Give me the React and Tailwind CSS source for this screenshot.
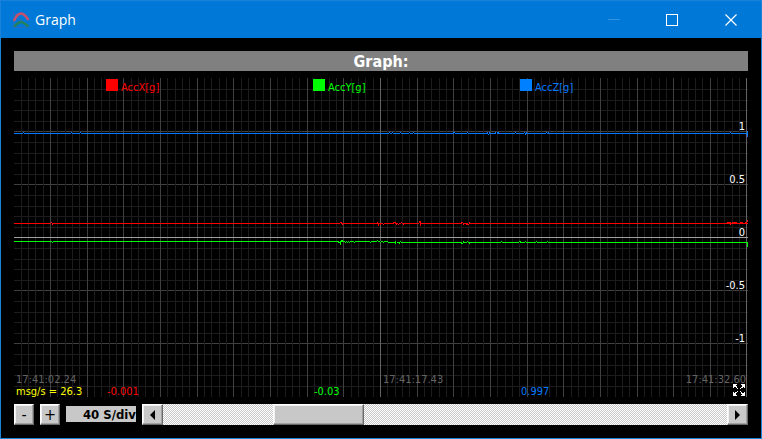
import React from "react";

const TAHOMA = "font-['DejaVu_Sans_Condensed','DejaVu_Sans',sans-serif]";
const W = 734;
const H = 319;

const range = (from, to) =>
  Array.from({ length: to - from + 1 }, (_, i) => from + i);

const columns = range(1, 100).map((k) => ({
  x: Math.round(7.331 * k - 0.62),
  major: k % 5 === 0,
  centre: k % 50 === 0,
}));

const rows = range(-14, 14).map((k) => ({
  y: 159 + Math.ceil(Math.round(106 * k) / 10),
  major: k % 5 === 0,
}));

const series = [
  {
    color: "#0078ff",
    base: [[0, 734, 55]],
    gaps: [9, 57, 66, 375, 378, 386, 395, 399, 440, 453, 474, 482, 501, 510, 532, 716],
    dots: [
      [9, 54], [57, 54], [66, 54], [375, 54], [378, 54], [386, 54], [395, 54],
      [399, 54], [439, 54, 2], [453, 54], [473, 54], [475, 54], [474, 56],
      [481, 54], [483, 54, 2], [501, 54], [510, 54], [512, 54], [511, 56],
      [532, 54], [534, 54], [716, 54], [733, 53, 1, 6],
    ],
  },
  {
    color: "#ff0000",
    base: [[0, 734, 145]],
    gaps: [37, 326, 364, 369, 380, 384, 387, 405, 448, 454],
    dots: [
      [37, 144], [38, 146], [326, 144, 2], [328, 146], [363, 144], [364, 145, 1, 3],
      [366, 146], [369, 146], [379, 144, 3], [382, 146], [384, 146], [387, 144],
      [389, 146], [405, 143, 2, 2], [406, 145, 1, 3], [447, 144, 2], [449, 146],
      [452, 146, 3], [455, 144], [713, 144, 4], [716, 146], [718, 144, 5],
      [726, 144, 3], [731, 144, 2], [733, 142, 1, 2],
    ],
  },
  {
    color: "#00ff00",
    base: [[0, 374, 163], [374, 734, 164]],
    gaps: [38, 325, 331, 333, 335, 340, 356, 363, 366, 369, 382, 386, 448, 453, 487, 505, 511, 522, 533],
    dots: [
      [38, 164], [324, 164, 2], [326, 164, 1, 3], [327, 162, 2], [331, 164],
      [333, 164], [335, 164], [340, 164], [356, 164], [363, 162], [366, 164],
      [369, 164], [381, 163, 1, 3], [386, 163], [385, 165], [447, 165, 2], [449, 163],
      [453, 163], [455, 165], [487, 163], [505, 163, 2], [511, 163], [522, 163],
      [533, 163], [733, 164, 1, 5],
    ],
  },
];

function Plot() {
  return (
    <svg
      className="block h-full w-full"
      viewBox={`0 0 ${W} ${H}`}
      preserveAspectRatio="none"
      shapeRendering="crispEdges"
      role="img"
      aria-label="Acceleration over time"
    >
      {rows.map((r) => (
        <rect key={r.y} x="0" y={r.y} width={W} height="1" fill={r.major ? "#404040" : "#1c1c1c"} />
      ))}
      {columns.filter((c) => !c.major).map((c) => (
        <rect key={c.x} x={c.x} y="0" width="1" height={H} fill="#1c1c1c" />
      ))}
      {columns.filter((c) => c.major).map((c) => (
        <rect key={c.x} x={c.x} y="0" width="1" height={H} fill={c.centre ? "#646464" : "#404040"} />
      ))}
      <rect x="0" y="159" width={W} height="1" fill="#a0a0a0" />
      {series.map((s) => (
        <g key={s.color} fill={s.color}>
          {s.base.map(([from, to, y]) => (
            <rect key={from} x={from} y={y} width={to - from} height="1" />
          ))}
          {s.gaps.map((x) => {
            const [, , y] = s.base.find(([from, to]) => x >= from && x < to);
            return <rect key={x} x={x} y={y} width="1" height="1" fill="#000" />;
          })}
          {s.dots.map(([x, y, w = 1, h = 1]) => (
            <rect key={`${x}-${y}`} x={x} y={y} width={w} height={h} />
          ))}
        </g>
      ))}
    </svg>
  );
}

const legend = [
  { name: "AccX[g]", value: "-0.001", text: "text-[#ff0000]", box: "bg-[#ff0000]" },
  { name: "AccY[g]", value: "-0.03", text: "text-[#00ff00]", box: "bg-[#00ff00]" },
  { name: "AccZ[g]", value: "0.997", text: "text-[#0078ff]", box: "bg-[#0080ff]" },
];

const scale = [
  { label: "1", top: "top-[43px]" },
  { label: "0.5", top: "top-[96px]" },
  { label: "0", top: "top-[149px]" },
  { label: "-0.5", top: "top-[202px]" },
  { label: "-1", top: "top-[255px]" },
];

const raised =
  "border border-t-white border-l-white border-r-[#696969] border-b-[#696969] bg-[#c8c8c8] shadow-[inset_-1px_-1px_0_#a0a0a0,inset_1px_1px_0_#f0f0f0]";

function TitleBar() {
  return (
    <header className="flex h-[37px] items-center bg-[#0078d7] pl-[11px] text-white">
      <svg width="18" height="18" viewBox="0 0 18 18" fill="none" aria-hidden="true">
        <path d="M1.5 1v15.500H17" stroke="#2a6cc0" strokeWidth="1" />
        <path d="M1 1l14 14" stroke="#3a68b4" strokeWidth="1" />
        <path d="M2 10C4 5.500 5.500 2.500 9 2.500S13.500 5 16.500 9" stroke="#c8506c" strokeWidth="2.500" />
        <path d="M2 15.500C5 13 6.500 11 9 11S13 13 16.500 15.500" stroke="#25805c" strokeWidth="2.500" />
      </svg>
      <h1 className="ml-[5px] flex-1 font-['Open_Sans',sans-serif] text-[14px] leading-5">Graph</h1>
      <button aria-label="Minimize" disabled className="flex h-full w-[59px] items-center justify-center">
        <svg width="12" height="12" shapeRendering="crispEdges"><rect y="5" width="12" height="1" fill="#3393df" /></svg>
      </button>
      <button aria-label="Maximize" className="flex h-full w-[58px] items-center justify-center">
        <svg width="12" height="12" shapeRendering="crispEdges"><rect x="0.5" y="0.5" width="11" height="11" fill="none" stroke="#fff" /></svg>
      </button>
      <button aria-label="Close" className="flex h-full w-[60px] items-center justify-center">
        <svg width="12" height="12"><path d="M.5.5l11 11M11.500.5l-11 11" stroke="#fff" strokeWidth="1.2" /></svg>
      </button>
    </header>
  );
}

function ExpandIcon() {
  return (
    <svg className="block" width="14" height="14" viewBox="0 0 14 14" shapeRendering="crispEdges" aria-hidden="true">
      <rect width="14" height="14" fill="#000" />
      {[0, 90, 180, 270].map((a) => (
        <g key={a} transform={`rotate(${a} 7 7)`} fill="#fff">
          <rect x="1" y="1" width="4" height="1" />
          <rect x="1" y="1" width="1" height="4" />
          <rect x="2" y="2" width="2" height="1" />
          <rect x="2" y="2" width="1" height="2" />
          <rect x="3" y="3" width="2" height="1" />
          <rect x="4" y="4" width="1" height="1" />
          <rect x="5" y="5" width="1" height="1" />
        </g>
      ))}
    </svg>
  );
}

function Chart() {
  return (
    <section className="relative mt-[7px] h-[319px] text-[11px] leading-[12px]">
      <Plot />
      <div className="absolute inset-x-0 top-px grid grid-cols-[92px_207px_207px_1fr]">
        <span />
        {legend.map((l) => (
          <div key={l.name} className={`flex gap-[3px] ${l.text}`}>
            <span className={`h-3 w-3 ${l.box}`} />
            <span className="pt-[3px]">{l.name}</span>
          </div>
        ))}
      </div>
      {scale.map((s) => (
        <span key={s.label} className={`absolute right-[3px] text-white ${s.top}`}>{s.label}</span>
      ))}
      <div className="absolute inset-x-0 bottom-[11px] grid grid-cols-[1fr_1fr] text-[#646464]">
        <span className="pl-[2px]">17:41:02.24</span>
        <span className="flex justify-between pr-[2px] pl-[2px]"><span>17:41:17.43</span><span>17:41:32.60</span></span>
      </div>
      <div className="absolute inset-x-0 -bottom-px grid grid-cols-[93px_207px_207px_1fr]">
        <span className="pl-[2px] text-[#ffff00]">msg/s = 26.3</span>
        {legend.map((l) => (
          <span key={l.name} className={l.text}>{l.value}</span>
        ))}
      </div>
      <button aria-label="Expand graph" className="absolute right-[2px] bottom-0">
        <ExpandIcon />
      </button>
    </section>
  );
}

function ScrollBar() {
  return (
    <div className="flex h-[21px] flex-1 bg-[repeating-conic-gradient(#c8c8c8_0_25%,#ffffff_0_50%)] bg-[length:2px_2px]">
      <button aria-label="Scroll left" className={`flex w-[21px] items-center justify-center ${raised}`}>
        <svg width="5" height="10"><path d="M5 0v10L0 5z" fill="#000" /></svg>
      </button>
      <div className="flex flex-1">
        <span className="w-[110px]" />
        <button aria-label="Scroll position" className={`w-[91px] ${raised}`} />
      </div>
      <button aria-label="Scroll right" className={`flex w-[21px] items-center justify-center ${raised}`}>
        <svg width="5" height="10"><path d="M0 0v10l5-5z" fill="#000" /></svg>
      </button>
    </div>
  );
}

export default function App() {
  return (
    <main className={`min-h-screen border border-[#1883d9] bg-black ${TAHOMA}`}>
      <TitleBar />
      <div className="px-[13px] pt-[13px]">
        <h2 className="h-5 bg-[#808080] text-center text-[16px] leading-[21px] font-bold text-white">Graph:</h2>
        <Chart />
        <div className="mt-[7px] flex text-black">
          <button aria-label="Zoom out" className={`h-[21px] w-5 text-[16px] leading-[20px] ${raised}`}>-</button>
          <button aria-label="Zoom in" className={`ml-[6px] h-[21px] w-5 text-[16px] leading-[20px] ${raised}`}>+</button>
          <output className="mt-[2px] mr-[6px] ml-[6px] h-4 w-[70px] bg-[#c8c8c8] text-right text-[13px] leading-[17px] font-bold whitespace-nowrap">40 S/div</output>
          <ScrollBar />
        </div>
      </div>
    </main>
  );
}
